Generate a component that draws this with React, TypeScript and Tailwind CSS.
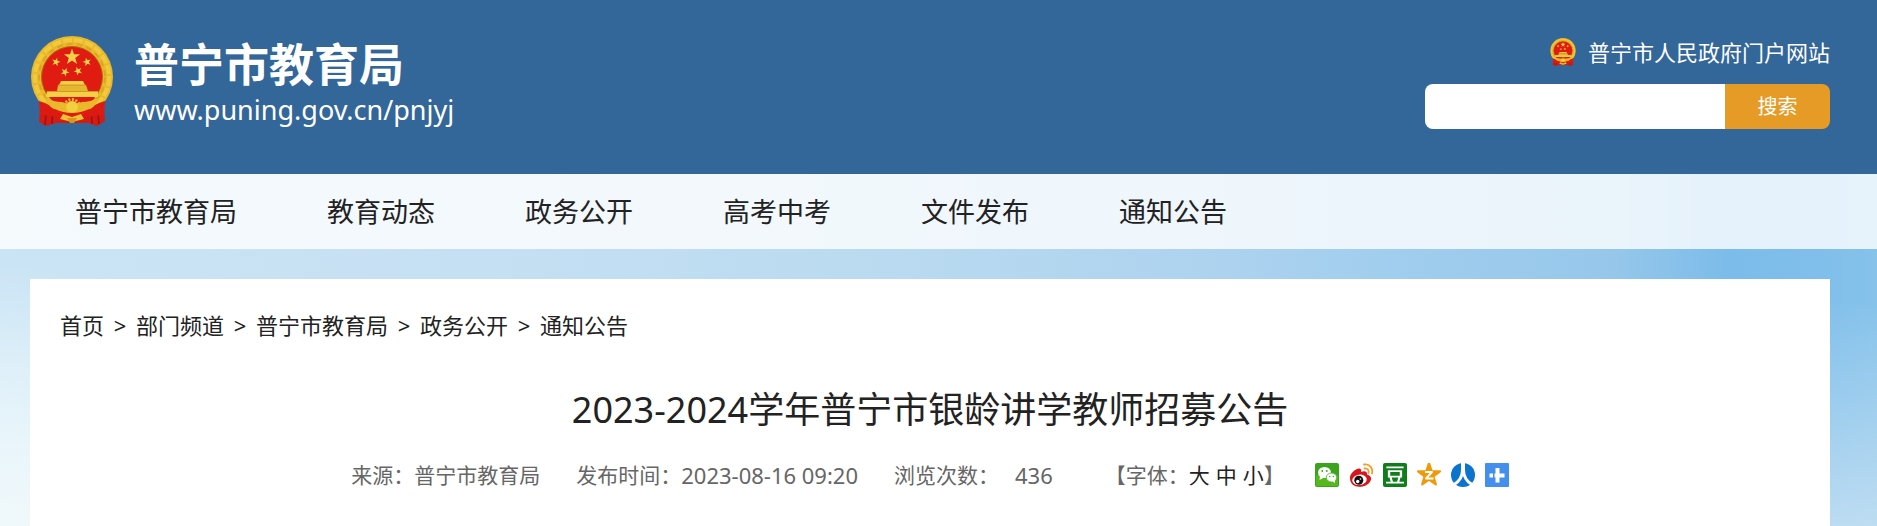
import React, { useState } from "react";
import { SiDouban } from "react-icons/si";

const STAR =
  "M0 -10 L2.35 -3.24 L9.51 -3.09 L3.8 1.24 L5.88 8.09 L0 4 L-5.88 8.09 L-3.8 1.24 L-9.51 -3.09 L-2.35 -3.24 Z";

function Emblem({ className }: { className?: string }) {
  return (
    <svg viewBox="0 0 84 90" className={className} aria-hidden="true">
      <path d="M11 64 L9 86 L16 90 L26 87 L58 87 L67 90 L75 85 L73 64 Z" fill="#d41a12" />
      <path d="M17 68 L15 89 M23 72 L22 88 M67 68 L69 88 M61 72 L62 88" stroke="#96150f" strokeWidth="1.5" />
      <circle cx="42" cy="41" r="41" fill="#e9b92b" />
      <circle cx="42" cy="41" r="37" fill="none" stroke="#f0c93c" strokeWidth="4" strokeDasharray="9 2" />
      <circle cx="42" cy="41" r="33" fill="none" stroke="#dca424" strokeWidth="2" strokeDasharray="6 4" />
      <circle cx="42" cy="41" r="30.5" fill="#e01b12" stroke="#b06a12" strokeWidth="1" />
      <g fill="#f3d046">
        <path d={STAR} transform="translate(42 21) scale(0.85)" />
        <path d={STAR} transform="translate(26 26) scale(0.45) rotate(15)" />
        <path d={STAR} transform="translate(57 26) scale(0.45) rotate(-15)" />
        <path d={STAR} transform="translate(35 36) scale(0.45) rotate(25)" />
        <path d={STAR} transform="translate(48 35) scale(0.45) rotate(-25)" />
        <path d="M31 45 H53 L55 49 H29 Z" />
        <path d="M28 49 H56 L58 55 H27 Z" fill="#e5b62f" />
        <path d="M17 55 H68 V61 H16 Z" />
      </g>
      <path d="M28 49 H56 M17 55.5 H68" stroke="#c98a1c" strokeWidth="0.8" />
      <path d="M20 62 H65 L60 67 H25 Z" fill="#e01b12" />
      <path d="M9 65 Q20 68 27 75 Q42 82 57 75 Q64 68 75 65 L74 80 Q64 78 58 82 Q42 86 26 82 Q20 78 10 80 Z" fill="#dc1a12" />
      <path d="M15 62 Q24 66 32 66 Q42 70 52 66 Q60 66 69 62 Q64 74 56 74 Q42 80 28 74 Q20 74 15 62 Z" fill="#e9b92b" />
      <circle cx="42" cy="71" r="6" fill="#f3cf3f" />
      <circle cx="42" cy="71" r="7.5" fill="none" stroke="#e9b92b" strokeWidth="3" strokeDasharray="2 1.5" />
      <path d="M25 73 Q42 81 59 73 L58 77 Q42 84 26 77 Z" fill="#e01b12" />
      <path d="M33 78 L42 81 L51 78 L54 83 L42 86 L30 83 Z" fill="#edc234" />
      <path d="M37 82 H47 L44 87 H40 Z" fill="#d9971d" />
    </svg>
  );
}

function WechatIcon() {
  return (
    <svg viewBox="0 0 24 24" className="size-6">
      <rect width="24" height="24" rx="2" fill="#3aa51c" />
      <rect x="1" y="12" width="22" height="11" rx="1" fill="#55b81c" />
      <ellipse cx="9.5" cy="9.5" rx="6.5" ry="5.5" fill="#fff" />
      <path d="M5 13 L4.5 17 L9 14.5 Z" fill="#fff" />
      <ellipse cx="16.5" cy="14.5" rx="5.2" ry="4.5" fill="#fff" stroke="#4ab01c" strokeWidth="0.8" />
      <path d="M17 18 L20 20 L20 17 Z" fill="#fff" />
      <circle cx="7.3" cy="8" r="0.9" fill="#3aa51c" />
      <circle cx="11.8" cy="8" r="0.9" fill="#3aa51c" />
      <circle cx="14.8" cy="13.5" r="0.7" fill="#3aa51c" />
      <circle cx="18.3" cy="13.5" r="0.7" fill="#3aa51c" />
    </svg>
  );
}

function WeiboIcon() {
  return (
    <svg viewBox="0 0 24 24" className="size-6">
      <path
        d="M1 16 C0 11 7 5 10.5 5.5 C12.5 6 12.3 8 12 9 C15 7.8 18.5 8 18 11.5 C21 12.5 22.5 14 22 16.5 C21 21 15.5 24 10 23.8 C5 23.5 1.5 21 1 16 Z"
        fill="#d9151b"
      />
      <ellipse cx="10.5" cy="16.8" rx="7.3" ry="5.2" fill="#fff" transform="rotate(-8 10.5 16.8)" />
      <circle cx="9.8" cy="17.2" r="4.5" fill="#111" />
      <circle cx="8.7" cy="18.5" r="1.7" fill="#fff" />
      <circle cx="11.5" cy="16" r="0.8" fill="#fff" />
      <path d="M15.5 5.5 C18.5 5 20.3 7.5 19.5 10" fill="none" stroke="#eda02c" strokeWidth="1.8" strokeLinecap="round" />
      <path d="M15 1.5 C20.5 0.5 24.3 5 23 10.5" fill="none" stroke="#eda02c" strokeWidth="1.8" strokeLinecap="round" />
    </svg>
  );
}

function DoubanIcon() {
  return (
    <span className="flex size-6 items-center justify-center rounded-xs bg-[#0f7d1c] text-white">
      <SiDouban className="size-[18px]" />
    </span>
  );
}

function QzoneIcon() {
  return (
    <svg viewBox="0 0 24 24" className="size-6">
      <path d={STAR} transform="translate(12 12) scale(1.15)" fill="#f09a0a" stroke="#f09a0a" strokeWidth="2" strokeLinejoin="round" />
      <path d="M8 9 H15 L9 15.5 H16.5" fill="none" stroke="#fff" strokeWidth="2" strokeLinejoin="round" />
    </svg>
  );
}

function RenrenIcon() {
  return (
    <svg viewBox="0 0 24 24" className="size-6">
      <circle cx="12" cy="12" r="12" fill="#0b74cf" />
      <path d="M12 -1 V8" fill="none" stroke="#fff" strokeWidth="4" />
      <path d="M11.5 7 C11.5 14 8 18.5 3 21.5" fill="none" stroke="#fff" strokeWidth="3" />
      <path d="M12.5 7 C12.5 14 16 18.5 21 21.5" fill="none" stroke="#fff" strokeWidth="3" />
    </svg>
  );
}

function MoreIcon() {
  return (
    <svg viewBox="0 0 24 24" className="size-6">
      <rect width="24" height="24" rx="1" fill="#458fec" />
      <path d="M10.5 5 H14.5 V10.5 H19.5 V14.5 H14.5 V19.5 H10.5 V14.5 H9.5 V10.5 H10.5 Z" fill="#fff" />
      <path d="M4.5 10.5 H8 V14.5 H4.5 Z" fill="#fff" />
    </svg>
  );
}

export default function App() {
  const [keyword, setKeyword] = useState("");

  const navItems = ["普宁市教育局", "教育动态", "政务公开", "高考中考", "文件发布", "通知公告"];
  const crumbs = ["首页", "部门频道", "普宁市教育局", "政务公开", "通知公告"];
  const fontSizes = ["大", "中", "小"];
  const shares = [
    { name: "微信", icon: <WechatIcon /> },
    { name: "新浪微博", icon: <WeiboIcon /> },
    { name: "豆瓣", icon: <DoubanIcon /> },
    { name: "QQ空间", icon: <QzoneIcon /> },
    { name: "人人网", icon: <RenrenIcon /> },
    { name: "更多", icon: <MoreIcon /> },
  ];

  return (
    <div className="flex min-h-screen flex-col bg-[linear-gradient(to_bottom,rgba(242,253,253,0)_300px,rgba(236,243,248,0.55)_526px),radial-gradient(ellipse_500px_260px_at_0_526px,#f4ffff,rgba(244,255,255,0)),linear-gradient(to_right,#cbe4f5,#c6e0f3_25%,#b9daf0_48%,#aed3ef_64%,#a0cdee_75%,#96c7ea_86%,#7cbcea_92%,#80bfeb_97%,#86c2ea)] font-['Noto_Sans','Noto_Sans_CJK_SC',sans-serif] text-[#222]">
      <header className="bg-[#336699] pr-[47px] pl-[30px] text-white">
        <div className="flex h-[174px] items-start justify-between">
          <a href="#" className="flex items-start pt-9">
            <Emblem className="h-[90px] w-[84px]" />
            <div className="ml-[20px]">
              <div className="text-[45px] leading-[58px] font-bold">普宁市教育局</div>
              <div className="text-[27px] leading-[32px]">www.puning.gov.cn/pnjyj</div>
            </div>
          </a>

          <div className="flex flex-col items-end pt-9">
            <a href="#" className="flex items-center gap-3 text-[22px] leading-[32px]">
              <Emblem className="h-[28px] w-[26px]" />
              普宁市人民政府门户网站
            </a>
            <form
              className="mt-4 flex h-[45px] w-[405px] overflow-hidden rounded-lg"
              onSubmit={(e) => e.preventDefault()}
            >
              <input
                type="text"
                aria-label="搜索"
                value={keyword}
                onChange={(e) => setKeyword(e.target.value)}
                className="min-w-0 flex-1 bg-white px-3 text-[20px] text-[#222] outline-none"
              />
              <button type="submit" className="w-[105px] bg-[#e59b25] text-[20px]">
                搜索
              </button>
            </form>
          </div>
        </div>
      </header>

      <nav className="bg-white/80 pr-[47px] pl-[30px]">
        <ul className="flex">
          {navItems.map((item) => (
            <li key={item}>
              <a href="#" className="block px-[45px] text-[27px] leading-[75px]">
                {item}
              </a>
            </li>
          ))}
        </ul>
      </nav>

      <main className="mt-[30px] mr-[47px] ml-[30px] flex-1 bg-white px-[30px] pt-[30px]">
        <div className="flex text-[22px] leading-[32px]">
          {crumbs.map((item, index) => (
            <React.Fragment key={item}>
              {index > 0 && <span className="w-8 text-center">&gt;</span>}
              <a href="#">{item}</a>
            </React.Fragment>
          ))}
        </div>

        <h1 className="mt-[41px] text-center text-[36px] leading-[56px]">
          2023-2024学年普宁市银龄讲学教师招募公告
        </h1>

        <div className="mt-[20px] flex items-center justify-center text-[21px] leading-[34px] text-[#666]">
          <span>来源：普宁市教育局</span>
          <span className="ml-9 flex">
            发布时间：<time className="text-[22px]">2023-08-16 09:20</time>
          </span>
          <span className="ml-9 flex">
            浏览次数：<span className="ml-4 text-[22px]">436</span>
          </span>
          <span className="ml-[52px] flex">
            【字体：
            <span className="flex gap-[6px] text-[#222]">
              {fontSizes.map((size) => (
                <button key={size} type="button">
                  {size}
                </button>
              ))}
            </span>
            】
          </span>
          <span className="ml-[30px] flex gap-[10px]">
            {shares.map((share) => (
              <a key={share.name} href="#" aria-label={share.name}>
                {share.icon}
              </a>
            ))}
          </span>
        </div>
      </main>
    </div>
  );
}
